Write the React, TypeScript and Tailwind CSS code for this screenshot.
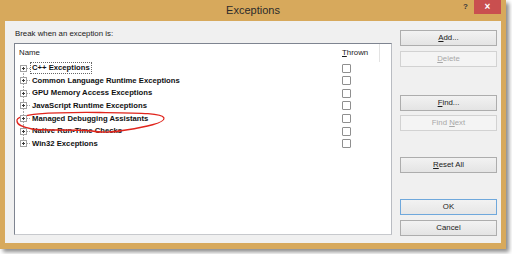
import type { ReactNode } from "react";

const items = [
  "C++ Exceptions",
  "Common Language Runtime Exceptions",
  "GPU Memory Access Exceptions",
  "JavaScript Runtime Exceptions",
  "Managed Debugging Assistants",
  "Native Run-Time Checks",
  "Win32 Exceptions",
];

function Btn({
  children,
  disabled,
  primary,
  className = "",
}: {
  children: ReactNode;
  disabled?: boolean;
  primary?: boolean;
  className?: string;
}) {
  const tone = disabled
    ? "border-[#d2d2d2] bg-[#f4f4f4] text-[#a8a8a8]"
    : primary
      ? "border-[#6fa8dc] bg-gradient-to-b from-[#f2f2f2] to-[#e6e6e6] text-[#1a1a1a]"
      : "border-[#adadad] bg-gradient-to-b from-[#f2f2f2] to-[#e4e4e4] text-[#1a1a1a]";
  return (
    <div
      className={`flex h-[16px] w-[97px] items-center justify-center border text-[7.8px] leading-none ${tone} ${className}`}
    >
      {children}
    </div>
  );
}

function Row({ label, index }: { label: string; index: number }) {
  const first = index === 0;
  const last = index === items.length - 1;
  return (
    <div className="relative flex h-[12.67px] items-center">
      <span
        className={`absolute left-[8px] border-l border-dotted border-[#a5a5a5] ${
          first ? "top-1/2 bottom-0" : last ? "top-0 bottom-1/2" : "top-0 bottom-0"
        }`}
      />
      <div className="flex w-[323px] items-center pl-[5px]">
        <div className="relative z-10 flex h-[7px] w-[7px] items-center justify-center border border-[#a2a2a2] bg-white">
          <span className="absolute h-px w-[3px] bg-[#3a3a3a]" />
          <span className="absolute h-[3px] w-px bg-[#3a3a3a]" />
        </div>
        <span className="w-[3px] border-t border-dotted border-[#a5a5a5]" />
        <div
          className={`flex h-[12px] items-center border px-[1px] ${
            first ? "border-dotted border-[#666]" : "border-transparent"
          }`}
        >
          <span className="text-[7.7px] font-bold leading-none whitespace-nowrap text-[#111]">{label}</span>
        </div>
      </div>
      <div className="pl-[4px]">
        <div className="h-[9px] w-[9px] rounded-[1px] border border-[#8f8f8f] bg-white" />
      </div>
    </div>
  );
}

export default function App() {
  return (
    <div className="relative h-[254px] w-[512px] bg-white font-['Liberation_Sans',Arial,sans-serif]">
      <div className="flex h-[249px] w-[506px] flex-col bg-[#d7a95c] shadow-[3px_3px_4px_rgba(0,0,0,0.45)]">
        {/* title bar */}
        <div className="relative flex h-[21px] shrink-0 items-center justify-center">
          <span className="text-[11px] leading-none text-[#2b2b2b]">Exceptions</span>
          <div className="absolute right-[5px] top-0 flex h-[14px] items-center">
            <span className="mr-[6px] text-[8px] font-bold leading-none text-[#3a3a3a]">?</span>
            <div className="flex h-[14px] w-[27px] items-center justify-center bg-[#c94f4f] text-[10px] font-bold leading-none text-white">
              ×
            </div>
          </div>
        </div>

        {/* client */}
        <div className="mx-[5px] flex h-[222px] bg-[#f0f0f0] pl-[9px]">
          <div className="flex w-[378px] flex-col">
            <div className="h-[22px] pl-[1px] pt-[8px] text-[7.85px] leading-[10px] text-[#1a1a1a]">
              Break when an exception is:
            </div>
            <div className="h-[192px] border border-[#7e8490] border-r-[#b9bcc2] border-b-[#c7c9cd] bg-white">
              <div className="flex h-[17.7px] items-center">
                <div className="w-[327px] pl-[4px] text-[7.85px] leading-none text-[#1a1a1a]">Name</div>
                <div className="flex h-full w-[38px] items-center border-r border-[#e3e3e3] text-[7.85px] leading-none text-[#1a1a1a]">
                  <u className="no-underline">
                    <span className="underline underline-offset-1">T</span>hrown
                  </u>
                </div>
              </div>
              {items.map((label, i) => (
                <Row key={label} label={label} index={i} />
              ))}
            </div>
          </div>

          <div className="ml-[8px] flex flex-col">
            <Btn className="mt-[9px]">
              <span className="underline underline-offset-1">A</span>dd...
            </Btn>
            <Btn className="mt-[5px]" disabled>
              <span className="underline underline-offset-1">D</span>elete
            </Btn>
            <Btn className="mt-[28px]">
              <span className="underline underline-offset-1">F</span>ind...
            </Btn>
            <Btn className="mt-[4px]" disabled>
              Find&nbsp;<span className="underline underline-offset-1">N</span>ext
            </Btn>
            <Btn className="mt-[26px]">
              <span className="underline underline-offset-1">R</span>eset All
            </Btn>
            <Btn className="mt-[26px]" primary>
              OK
            </Btn>
            <Btn className="mt-[5px]">Cancel</Btn>
          </div>
        </div>
      </div>

      {/* hand-drawn red annotation */}
      <svg className="pointer-events-none absolute left-0 top-0" width="512" height="254" viewBox="0 0 512 254">
        <path
          d="M17 121 C15 114 50 112 100 112.5 C140 113 162 113 164 118 C165 123 145 127 126 130 C110 133 102 133 92 131 C70 129 45 131 32 129 C22 127 17 125 17 121"
          fill="none"
          stroke="#e0241c"
          strokeWidth="1.3"
          strokeLinecap="round"
        />
      </svg>
    </div>
  );
}
